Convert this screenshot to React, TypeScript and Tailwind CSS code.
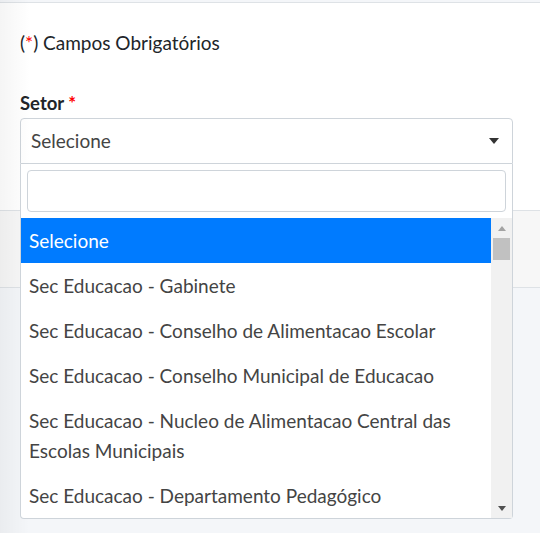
const options = [
  "Selecione",
  "Sec Educacao - Gabinete",
  "Sec Educacao - Conselho de Alimentacao Escolar",
  "Sec Educacao - Conselho Municipal de Educacao",
  "Sec Educacao - Nucleo de Alimentacao Central das Escolas Municipais",
  "Sec Educacao - Departamento Pedagógico",
];

function Caret({ className = "" }: { className?: string }) {
  return (
    <svg width="10" height="6" viewBox="0 0 10 6" className={className}>
      <path d="M0 0h10L5 6z" fill="currentColor" />
    </svg>
  );
}

function FakeScrollbar() {
  return (
    <div className="flex w-[21px] shrink-0 flex-col items-center bg-[#f1f1f1]">
      <div className="flex h-[20px] items-center text-[#a3a3a3]">
        <svg width="8" height="5" viewBox="0 0 8 5">
          <path d="M0 5h8L4 0z" fill="currentColor" />
        </svg>
      </div>
      <div className="h-[22px] w-[17px] bg-[#c1c1c1]" />
      <div className="flex-1" />
      <div className="flex h-[20px] items-center text-[#505050]">
        <svg width="8" height="5" viewBox="0 0 8 5">
          <path d="M0 0h8L4 5z" fill="currentColor" />
        </svg>
      </div>
    </div>
  );
}

export default function App() {
  return (
    <div className="relative h-[533px] w-[540px] overflow-hidden bg-[#f4f6f9] font-['Lato',sans-serif] text-[#212529]">
      <div className="mt-[2px] border-t border-[#dee2e6] bg-white">
        <div className="pb-[46px] pl-5 pr-[27px] pt-[28px]">
          <p className="text-[19px] leading-6">
            (<span className="text-[#ff0000]">*</span>) Campos Obrigatórios
          </p>
          <label className="mt-[36px] block text-[18.5px] font-bold leading-6">
            Setor <span className="text-[#ff0000]">*</span>
          </label>
          <div className="relative mt-[3px]">
            <div className="flex h-[46px] items-center justify-between rounded-t border border-[#ced4da] pl-[10px] pr-[13px] text-[19px] text-[#444]">
              <span>Selecione</span>
              <Caret className="text-[#333]" />
            </div>
            <div className="absolute left-0 right-0 top-full z-10 rounded-b border border-t-0 border-[#ced4da] bg-white">
              <div className="p-[6px]">
                <div className="h-[42px] rounded border border-[#ced4da]" />
              </div>
              <div className="flex h-[300px]">
                <ul className="flex-1 overflow-hidden text-[19px] leading-[30px] text-[#444]">
                  {options.map((o, i) => (
                    <li
                      key={o}
                      className={`px-2 py-[7.5px] ${i === 0 ? "bg-[#007bff] text-white" : ""}`}
                    >
                      {o}
                    </li>
                  ))}
                </ul>
                <FakeScrollbar />
              </div>
            </div>
          </div>
        </div>
        <div className="h-[78px] border-b border-t border-[#dee2e6] bg-[#f7f7f7]" />
      </div>
      <div className="pointer-events-none absolute inset-y-0 left-0 w-[30px] bg-gradient-to-r from-black/[0.04] to-transparent" />
    </div>
  );
}
